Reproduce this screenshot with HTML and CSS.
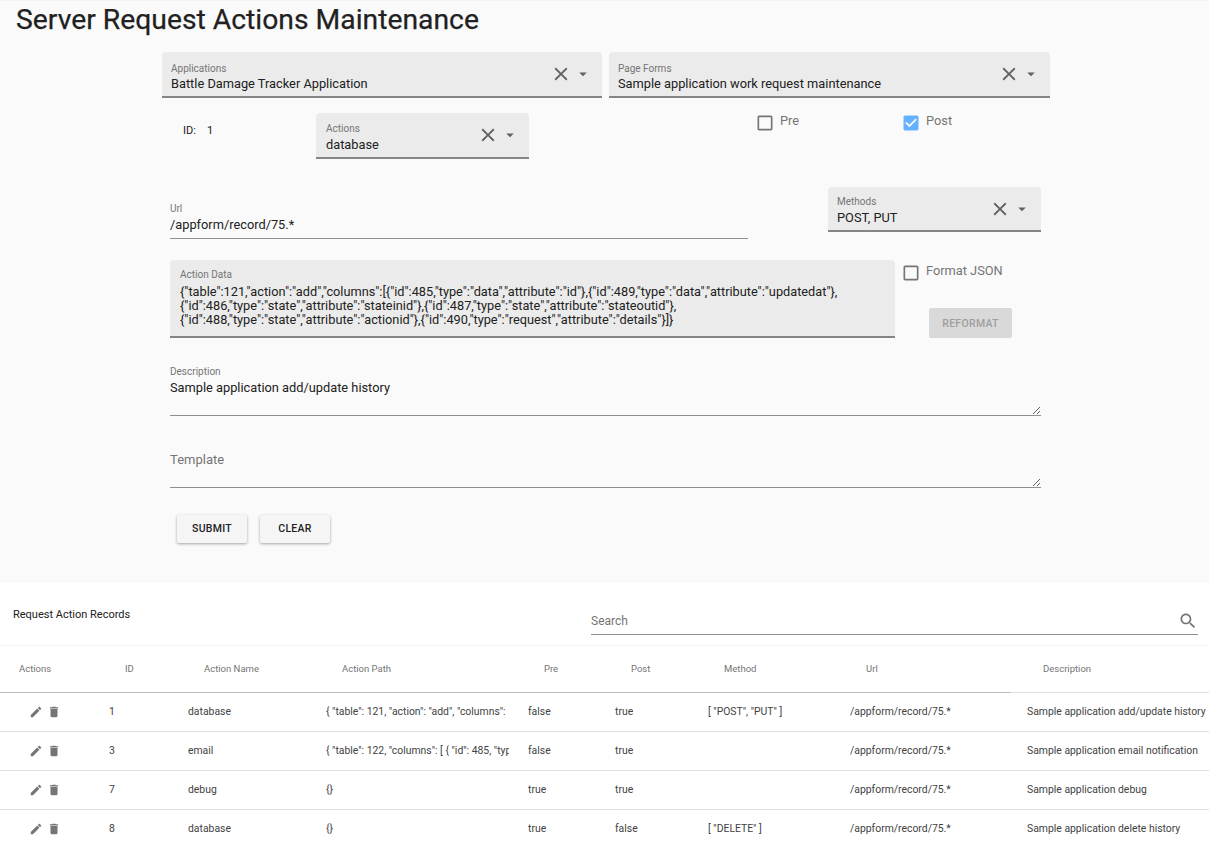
FILE: index.html
```html
<!DOCTYPE html>
<html lang="en">
  <head>
    <meta charset="UTF-8" />
    <title>Server Request Actions Maintenance</title>
    <link rel="stylesheet" href="styles.css">
  </head>
  <body>
    <svg class="sprite" aria-hidden="true">
      <symbol id="i-close" viewBox="0 0 24 24"><path d="M19 6.41L17.59 5 12 10.59 6.41 5 5 6.41 10.59 12 5 17.59 6.41 19 12 13.41 17.59 19 19 17.59 13.41 12z"/></symbol>
      <symbol id="i-drop" viewBox="0 0 24 24"><path d="M7 10l5 5 5-5z"/></symbol>
      <symbol id="i-box" viewBox="0 0 24 24"><path d="M19 5v14H5V5h14m0-2H5c-1.1 0-2 .9-2 2v14c0 1.1.9 2 2 2h14c1.1 0 2-.9 2-2V5c0-1.1-.9-2-2-2z"/></symbol>
      <symbol id="i-checked" viewBox="0 0 24 24"><path d="M19 3H5c-1.11 0-2 .9-2 2v14c0 1.1.89 2 2 2h14c1.11 0 2-.9 2-2V5c0-1.1-.89-2-2-2zm-9 14l-5-5 1.41-1.41L10 14.17l7.59-7.59L19 8l-9 9z"/></symbol>
      <symbol id="i-edit" viewBox="0 0 24 24"><path d="M3 17.25V21h3.75L17.81 9.94l-3.75-3.75L3 17.25zM20.71 7.04c.39-.39.39-1.02 0-1.41l-2.34-2.34c-.39-.39-1.02-.39-1.41 0l-1.83 1.83 3.75 3.75 1.83-1.83z"/></symbol>
      <symbol id="i-delete" viewBox="0 0 24 24"><path d="M6 19c0 1.1.9 2 2 2h8c1.1 0 2-.9 2-2V7H6v12zM19 4h-3.5l-1-1h-5l-1 1H5v2h14V4z"/></symbol>
      <symbol id="i-search" viewBox="0 0 24 24"><path d="M15.5 14h-.79l-.28-.27C15.41 12.59 16 11.11 16 9.5 16 5.91 13.09 3 9.5 3S3 5.91 3 9.5 5.91 16 9.5 16c1.61 0 3.09-.59 4.23-1.57l.27.28v.79l5 4.99L20.49 19l-4.99-5zm-6 0C7.01 14 5 11.99 5 9.5S7.01 5 9.5 5 14 7.01 14 9.5 11.99 14 9.5 14z"/></symbol>
    </svg>

    <h1 class="page-title">Server Request Actions Maintenance</h1>

    <form class="editor">
      <div class="row-apps">
        <div class="select">
          <div class="select-text">
            <span class="small-label">Applications</span>
            <span class="select-value">Battle Damage Tracker Application</span>
          </div>
          <svg class="icon-close"><use href="#i-close"/></svg>
          <svg class="icon-drop"><use href="#i-drop"/></svg>
        </div>
        <div class="select">
          <div class="select-text">
            <span class="small-label">Page Forms</span>
            <span class="select-value">Sample application work request maintenance</span>
          </div>
          <svg class="icon-close"><use href="#i-close"/></svg>
          <svg class="icon-drop"><use href="#i-drop"/></svg>
        </div>
      </div>

      <div class="row-action">
        <div class="id-label"><span>ID:</span><span>1</span></div>
        <div class="select">
          <div class="select-text">
            <span class="small-label">Actions</span>
            <span class="select-value">database</span>
          </div>
          <svg class="icon-close"><use href="#i-close"/></svg>
          <svg class="icon-drop"><use href="#i-drop"/></svg>
        </div>
        <label class="check check-pre">
          <svg class="check-box"><use href="#i-box"/></svg>
          <span>Pre</span>
        </label>
        <label class="check">
          <svg class="check-box is-checked"><use href="#i-checked"/></svg>
          <span>Post</span>
        </label>
      </div>

      <div class="row-url">
        <div class="text-field url-field">
          <span class="small-label">Url</span>
          <span class="select-value">/appform/record/75.*</span>
        </div>
        <div class="select methods-field">
          <div class="select-text">
            <span class="small-label">Methods</span>
            <span class="select-value">POST, PUT</span>
          </div>
          <svg class="icon-close"><use href="#i-close"/></svg>
          <svg class="icon-drop"><use href="#i-drop"/></svg>
        </div>
      </div>

      <div class="row-data">
        <div class="data-field">
          <span class="small-label">Action Data</span>
          <div class="data-value">{"table":121,"action":"add","columns":[{"id":485,"type":"data","attribute":"id"},{"id":489,"type":"data","attribute":"updatedat"},<br>{"id":486,"type":"state","attribute":"stateinid"},{"id":487,"type":"state","attribute":"stateoutid"},<br>{"id":488,"type":"state","attribute":"actionid"},{"id":490,"type":"request","attribute":"details"}]}</div>
        </div>
        <div class="data-side">
          <label class="check">
            <svg class="check-box"><use href="#i-box"/></svg>
            <span>Format JSON</span>
          </label>
          <button type="button" class="btn-reformat">REFORMAT</button>
        </div>
      </div>

      <div class="area-field description-field">
        <label class="small-label" for="description">Description</label>
        <textarea id="description" rows="2">Sample application add/update history</textarea>
      </div>

      <div class="area-field template-field">
        <label class="area-label" for="template">Template</label>
        <textarea id="template" rows="1"></textarea>
      </div>

      <div class="form-buttons">
        <button type="button" class="btn">SUBMIT</button>
        <button type="button" class="btn">CLEAR</button>
      </div>
    </form>

    <section class="records">
      <div class="records-head">
        <div class="records-title">Request Action Records</div>
        <div class="search">
          <span>Search</span>
          <svg class="icon-search"><use href="#i-search"/></svg>
        </div>
      </div>
      <table class="records-table">
        <colgroup>
          <col class="col-actions"><col class="col-id"><col class="col-name"><col class="col-path"><col class="col-pre"><col class="col-post"><col class="col-method"><col class="col-url"><col class="col-desc">
        </colgroup>
        <thead>
          <tr>
            <th>Actions</th><th>ID</th><th>Action Name</th><th>Action Path</th><th>Pre</th><th>Post</th><th>Method</th><th>Url</th><th>Description</th>
          </tr>
        </thead>
        <tbody>
          <tr>
            <td class="row-icons"><svg><use href="#i-edit"/></svg><svg><use href="#i-delete"/></svg></td>
            <td>1</td><td>database</td>
            <td class="path-cell"><div>{ "table": 121, "action": "add", "columns":</div></td>
            <td>false</td><td>true</td><td>[ "POST", "PUT" ]</td><td>/appform/record/75.*</td><td>Sample application add/update history</td>
          </tr>
          <tr>
            <td class="row-icons"><svg><use href="#i-edit"/></svg><svg><use href="#i-delete"/></svg></td>
            <td>3</td><td>email</td>
            <td class="path-cell"><div>{ "table": 122, "columns": [ { "id": 485, "typ</div></td>
            <td>false</td><td>true</td><td></td><td>/appform/record/75.*</td><td>Sample application email notification</td>
          </tr>
          <tr>
            <td class="row-icons"><svg><use href="#i-edit"/></svg><svg><use href="#i-delete"/></svg></td>
            <td>7</td><td>debug</td>
            <td class="path-cell"><div>{}</div></td>
            <td>true</td><td>true</td><td></td><td>/appform/record/75.*</td><td>Sample application debug</td>
          </tr>
          <tr>
            <td class="row-icons"><svg><use href="#i-edit"/></svg><svg><use href="#i-delete"/></svg></td>
            <td>8</td><td>database</td>
            <td class="path-cell"><div>{}</div></td>
            <td>true</td><td>false</td><td>[ "DELETE" ]</td><td>/appform/record/75.*</td><td>Sample application delete history</td>
          </tr>
        </tbody>
      </table>
    </section>
  </body>
</html>
```

FILE: styles.css
```css
html,
body {
  height: 845px;
  overflow: hidden;
}
body {
  margin: 0;
  background-color: #fafafa;
  font-family: Roboto, "Liberation Sans", sans-serif;
  color: #212121;
}
.sprite {
  display: none;
}
.page-title {
  margin: 0;
  padding-left: 16px;
  height: 52px;
  line-height: 38px;
  font-size: 28.3px;
  font-weight: 400;
  -webkit-text-stroke: 0.25px #212121;
  border-top: 1px solid #f2f2f2;
  box-sizing: border-box;
}
.editor {
  width: 888px;
  margin-left: 162px;
  padding-bottom: 40px;
}
.small-label {
  display: block;
  font-size: 10px;
  line-height: 12px;
  color: #757575;
}
.select-value {
  display: block;
  font-size: 12.8px;
  line-height: 17px;
}

/* filled selects */
.select {
  display: flex;
  align-items: center;
  height: 46px;
  box-sizing: border-box;
  padding: 0 10px 0 9px;
  background-color: #ebebeb;
  border-bottom: 2px solid #858585;
  border-radius: 4px 4px 0 0;
}
.select-text {
  flex: 1;
  padding-top: 9px;
  align-self: flex-start;
}
.icon-close {
  width: 22px;
  height: 22px;
  fill: #616161;
}
.icon-drop {
  width: 18px;
  height: 18px;
  margin-left: 2px;
  fill: #616161;
}
.row-apps {
  display: grid;
  grid-template-columns: 440px 441px;
  gap: 7px;
}
.row-apps .select-text {
  padding-top: 11px;
}
.row-action {
  display: grid;
  grid-template-columns: 154px 213px 226px 146px 1fr;
  margin-top: 15px;
  height: 46px;
}
.id-label {
  display: flex;
  gap: 11px;
  padding: 11px 0 0 21px;
  font-size: 11px;
  line-height: 14px;
}
.row-action .select {
  padding-left: 10px;
}
.row-action .select-text {
  padding-top: 10px;
}
.row-action .select-value,
.methods-field .select-value {
  margin-top: 1px;
}
.check {
  display: flex;
  align-items: flex-start;
  gap: 5px;
  font-size: 12.8px;
  line-height: 16px;
  color: #757575;
}
.check-pre {
  grid-column: 4;
}
.check-box {
  width: 20px;
  height: 20px;
  flex: none;
  fill: #757575;
}
.check-box.is-checked {
  fill: #64b1ff;
}

/* url row */
.row-url {
  display: flex;
  align-items: flex-start;
  margin-top: 28px;
  height: 52px;
  padding-left: 8px;
}
.url-field {
  width: 578px;
  margin-top: 16px;
  height: 36px;
  box-sizing: border-box;
  border-bottom: 1px solid #8f8f8f;
}
.url-field .select-value {
  margin-top: 1px;
}
.methods-field {
  width: 213px;
  height: 45px;
  margin-left: 80px;
}

/* action data */
.row-data {
  display: flex;
  margin-top: 21px;
  padding-left: 8px;
}
.data-field {
  width: 725px;
  height: 78px;
  box-sizing: border-box;
  padding: 9px 10px 0;
  background-color: #ebebeb;
  border-bottom: 2px solid #858585;
  border-radius: 4px 4px 0 0;
}
.data-value {
  margin-top: 4px;
  font-size: 12.75px;
  line-height: 14px;
  white-space: nowrap;
}
.data-side {
  margin-left: 6px;
  width: 122px;
  display: flex;
  flex-direction: column;
  align-items: flex-start;
  padding-top: 3px;
}
.btn-reformat {
  margin: 25px 0 0 28px;
  width: 83px;
  height: 30px;
  padding: 0;
  border: none;
  border-radius: 2px;
  background-color: #d9d9d9;
  color: #9e9e9e;
  font-family: inherit;
  font-size: 10.5px;
  font-weight: 500;
  letter-spacing: 0.3px;
}

/* plain textareas */
.area-field {
  margin-left: 8px;
  width: 871px;
  display: flex;
  flex-direction: column;
}
.area-field textarea {
  display: block;
  box-sizing: border-box;
  width: 100%;
  border: none;
  border-bottom: 1px solid #8f8f8f;
  background: transparent;
  padding: 0;
  margin: 0;
  resize: vertical;
  font-family: inherit;
  font-size: 12.8px;
  line-height: 17px;
  color: #212121;
  outline: none;
}
.description-field {
  margin-top: 28px;
}
.description-field textarea {
  height: 38px;
  padding-top: 1px;
}
.template-field {
  margin-top: 36px;
}
.area-label {
  font-size: 13px;
  line-height: 16px;
  color: #757575;
}
.template-field textarea {
  height: 20px;
}
.form-buttons {
  display: flex;
  gap: 13px;
  margin: 27px 0 0 15px;
}
.btn {
  width: 70px;
  height: 28px;
  padding: 0 0 2px;
  border: none;
  border-radius: 2px;
  background-color: #f5f5f5;
  color: #212121;
  font-family: inherit;
  font-size: 10.5px;
  font-weight: 500;
  letter-spacing: 0.3px;
  box-shadow: 0 1px 3px rgba(0, 0, 0, 0.35);
}

/* records table */
.records {
  background-color: #fff;
  height: 262px;
  overflow: hidden;
}
.records-head {
  display: flex;
  height: 63px;
  box-sizing: border-box;
  border-bottom: 1px solid #f5f5f5;
}
.records-title {
  width: 591px;
  padding: 25px 0 0 13px;
  box-sizing: border-box;
  font-size: 11px;
  line-height: 13px;
}
.search {
  display: flex;
  justify-content: space-between;
  align-items: center;
  width: 607px;
  height: 25px;
  margin-top: 27px;
  box-sizing: border-box;
  padding-bottom: 3px;
  border-bottom: 1px solid #8f8f8f;
  font-size: 12px;
  color: #757575;
}
.icon-search {
  width: 20px;
  height: 20px;
  fill: #757575;
}
.records-table {
  width: 1209px;
  table-layout: fixed;
  border-collapse: collapse;
  font-size: 10.4px;
}
.col-actions { width: 93px; }
.col-id { width: 79px; }
.col-name { width: 138px; }
.col-path { width: 202px; }
.col-pre { width: 87px; }
.col-post { width: 93px; }
.col-method { width: 142px; }
.col-url { width: 177px; }
.col-desc { width: 198px; }
th {
  height: 46px;
  box-sizing: border-box;
  padding: 0 0 0 32px;
  text-align: left;
  font-weight: 400;
  font-size: 9.5px;
  color: #757575;
  border-bottom: 1px solid #bdbdbd;
}
th:first-child {
  padding-left: 19px;
}
th:last-child {
  border-bottom-color: #e0e0e0;
}
td {
  height: 39px;
  box-sizing: border-box;
  padding: 0 0 0 16px;
  white-space: nowrap;
  color: #424242;
  border-bottom: 1px solid #e0e0e0;
}
.path-cell div {
  width: 183px;
  overflow: hidden;
}
.row-icons svg {
  width: 14px;
  height: 14px;
  margin-right: 4px;
  vertical-align: middle;
  fill: #757575;
}
td.row-icons {
  padding-left: 29px;
}
```
